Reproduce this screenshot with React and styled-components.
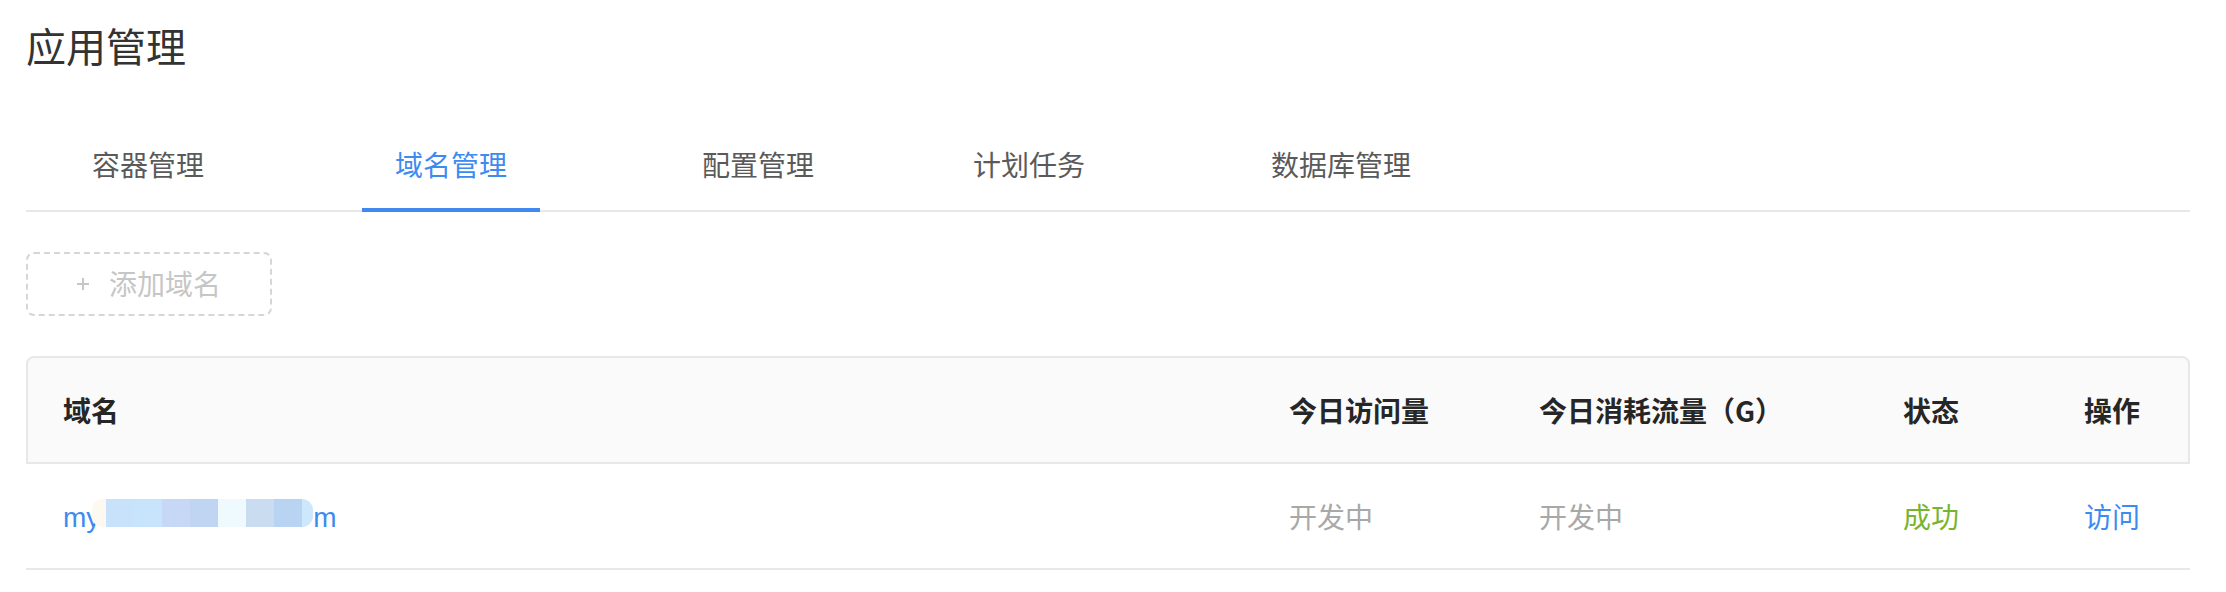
import React from 'react';
import styled, { createGlobalStyle } from 'styled-components';

const GlobalStyle = createGlobalStyle`
  html, body {
    margin: 0;
    padding: 0;
    background: #fff;
  }
  body {
    font-family: "Noto Sans CJK SC", "Noto Sans", sans-serif;
    color: #333;
  }
`;

const Page = styled.div`
  padding: 17px 36px 0 26px;
`;

const Title = styled.h1`
  margin: 0;
  font-size: 40px;
  line-height: 56px;
  font-weight: 400;
  color: #333;
`;

const TabBar = styled.div`
  display: flex;
  margin-top: 45px;
  border-bottom: 2px solid #e8e8e8;
`;

const Tab = styled.div`
  position: relative;
  margin-left: ${p => p.$offset}px;
  padding: 26px 33px;
  font-size: 28px;
  line-height: 40px;
  white-space: nowrap;
  color: ${p => (p.$active ? '#3e8bf0' : '#5a5a5a')};
  cursor: pointer;

  &::after {
    content: '';
    display: ${p => (p.$active ? 'block' : 'none')};
    position: absolute;
    left: 0;
    right: 0;
    bottom: -2px;
    height: 4px;
    background: #4089f0;
  }
`;

const AddButton = styled.button`
  display: flex;
  align-items: center;
  justify-content: center;
  gap: 20px;
  box-sizing: border-box;
  width: 246px;
  height: 64px;
  margin-top: 40px;
  padding: 0 0 3px;
  background: #fff;
  border: 2px dashed #d6d6d6;
  border-radius: 8px;
  font-family: inherit;
  font-size: 28px;
  line-height: 40px;
  color: #c6c6c6;
  cursor: pointer;
`;

const PlusIcon = () => (
  <svg width="12" height="12" viewBox="0 0 12 12" style={{ marginTop: 3 }}>
    <path d="M6 0v12M0 6h12" stroke="#c6c6c6" strokeWidth="2" fill="none" />
  </svg>
);

const Table = styled.div`
  margin-top: 40px;
`;

const columns = '1226px 250px 364px 181px 1fr';

const HeadRow = styled.div`
  display: grid;
  grid-template-columns: ${columns};
  height: 104px;
  align-items: center;
  background: #fafafa;
  border: 2px solid #e8e8e8;
  border-radius: 8px 8px 0 0;
`;

const HeadCell = styled.div`
  padding: 0 35px;
  font-size: 28px;
  line-height: 40px;
  font-weight: 600;
  color: #262626;
  white-space: nowrap;
`;

const BodyRow = styled.div`
  display: grid;
  grid-template-columns: ${columns};
  height: 104px;
  align-items: center;
  padding: 0 2px;
  border-bottom: 2px solid #e8e8e8;
`;

const Cell = styled.div`
  padding: 0 35px;
  font-size: 28px;
  line-height: 40px;
  white-space: nowrap;
  color: ${p => p.$color || '#a8a8a8'};
`;

const DomainLink = styled.a`
  font-family: "Liberation Sans", "Noto Sans CJK SC", sans-serif;
  color: #3e8bf0;
  text-decoration: none;
`;

const Mosaic = styled.span`
  display: inline-flex;
  vertical-align: baseline;
  height: 28px;
  margin-left: -8px;
`;

const Tile = styled.span`
  display: block;
  width: ${p => p.$w}px;
  height: 28px;
  background: ${p => p.$c};
  border-radius: ${p => p.$r || '0'};
`;

const tabs = [
  { label: '容器管理', offset: 33 },
  { label: '域名管理', offset: 125, active: true },
  { label: '配置管理', offset: 129 },
  { label: '计划任务', offset: 93 },
  { label: '数据库管理', offset: 120 },
];

const tiles = [
  { w: 14, c: '#fdf8f0', r: '10px 0 0 10px' },
  { w: 28, c: '#c9e2fb' },
  { w: 28, c: '#c8e4fd' },
  { w: 28, c: '#c6d8f6' },
  { w: 28, c: '#c0d5f2' },
  { w: 28, c: '#effaff' },
  { w: 28, c: '#c9dcf0' },
  { w: 28, c: '#b9d4f2' },
  { w: 11, c: '#cde8fc', r: '0 14px 14px 0' },
];

export default function App() {
  return (
    <Page>
      <GlobalStyle />
      <Title>应用管理</Title>
      <TabBar>
        {tabs.map(t => (
          <Tab key={t.label} $offset={t.offset} $active={t.active}>
            {t.label}
          </Tab>
        ))}
      </TabBar>
      <AddButton>
        <PlusIcon />
        <span>添加域名</span>
      </AddButton>
      <Table>
        <HeadRow>
          <HeadCell>域名</HeadCell>
          <HeadCell>今日访问量</HeadCell>
          <HeadCell>今日消耗流量（G）</HeadCell>
          <HeadCell>状态</HeadCell>
          <HeadCell>操作</HeadCell>
        </HeadRow>
        <BodyRow>
          <Cell>
            <DomainLink href="#">
              my
              <Mosaic>
                {tiles.map((t, i) => (
                  <Tile key={i} $w={t.w} $c={t.c} $r={t.r} />
                ))}
              </Mosaic>
              m
            </DomainLink>
          </Cell>
          <Cell>开发中</Cell>
          <Cell>开发中</Cell>
          <Cell $color="#78b52f">成功</Cell>
          <Cell $color="#3e8bf0">访问</Cell>
        </BodyRow>
      </Table>
    </Page>
  );
}
